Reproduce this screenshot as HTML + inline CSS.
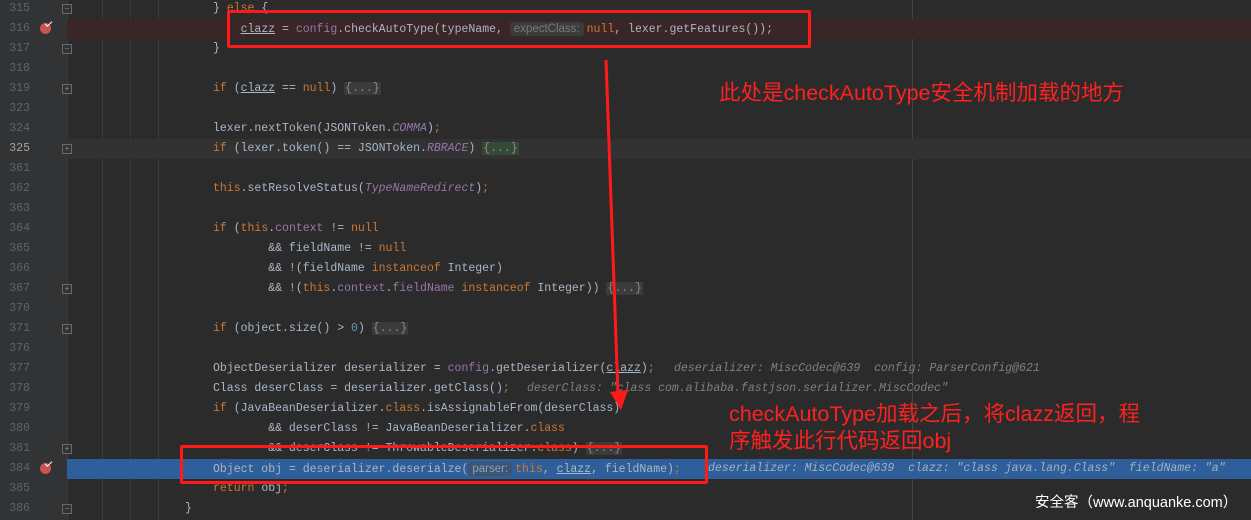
<!DOCTYPE html>
<html><head><meta charset="utf-8"><style>
body{margin:0;width:1251px;height:520px;overflow:hidden;background:#2b2b2b;position:relative;font-family:"Liberation Mono",monospace;}
.g{position:absolute;left:0;top:0;width:67px;height:520px;background:#313335;}
.gl{position:absolute;left:67px;top:0;width:1px;height:520px;background:#3a3a3a}
.row{position:absolute;left:0;width:1251px;height:20px;}
.n{position:absolute;left:0;width:30px;text-align:right;font-size:11.5px;line-height:20px;color:#606366;font-family:"Liberation Mono",monospace}
.c{position:absolute;left:213px;font-size:11.5px;line-height:20px;color:#a9b7c6;white-space:pre}
.k{color:#cc7832}.f{color:#9876aa}.i{color:#9876aa;font-style:italic}.num{color:#6897bb}
.u{text-decoration:underline}
.fold{background:#3b3b3b;color:#8a8a8a;padding:0 1px}
.hint{font-family:"Liberation Sans",sans-serif;font-size:11.5px;background:#3b3b3b;color:#7a7a7a;border-radius:3px;padding:1px 4px;margin-right:3px}
.dbg{position:absolute;font-size:11.5px;line-height:20px;color:#808080;font-style:italic;white-space:pre}
.bp{position:absolute;left:40px;top:4px;width:11px;height:11px;border-radius:50%;background:#c75450}
.bp:after{content:"";position:absolute;left:5px;top:-2px;width:6px;height:3px;border-left:1.5px solid #fff;border-bottom:1.5px solid #fff;transform:rotate(-45deg)}
.fm{position:absolute;left:62px;top:5px;width:8px;height:8px;border:1px solid #6a6a6a;background:#313335;font-size:8px;line-height:8px;text-align:center;color:#8a8a8a;font-family:"Liberation Sans",sans-serif}
.ann{position:absolute;color:#ff2020;font-family:"Liberation Sans","Noto Sans CJK SC",sans-serif;font-size:21.5px}
</style></head><body>
<div class="g"></div><div class="gl"></div>
<div style="position:absolute;left:102px;top:0;width:1px;height:520px;background:#3a3a3a"></div>
<div style="position:absolute;left:130px;top:0;width:1px;height:520px;background:#3a3a3a"></div>
<div style="position:absolute;left:158px;top:0;width:1px;height:520px;background:#3a3a3a"></div>
<div style="position:absolute;left:912px;top:0;width:1px;height:520px;background:#444"></div>

<div class="row" style="top:-1px"><div class="n">315</div><div class="fm">−</div><div class="c"><span>} </span><span class="k">else</span> {</div></div>
<div class="row" style="top:19px"><div style="position:absolute;left:67px;right:0;top:0;bottom:0;background:#3a2626"></div><div class="n">316</div><div class="bp"></div><div class="c">    <span class="u">clazz</span> = <span class="f">config</span>.checkAutoType(typeName, <span class="hint">expectClass:</span><span class="k">null</span>, lexer.getFeatures());</div></div>
<div class="row" style="top:39px"><div class="n">317</div><div class="fm">−</div><div class="c">}</div></div>
<div class="row" style="top:59px"><div class="n">318</div></div>
<div class="row" style="top:79px"><div class="n">319</div><div class="fm">+</div><div class="c"><span class="k">if</span> (<span class="u">clazz</span> == <span class="k">null</span>) <span class="fold">{...}</span></div></div>
<div class="row" style="top:99px"><div class="n">323</div></div>
<div class="row" style="top:119px"><div class="n">324</div><div class="c">lexer.nextToken(JSONToken.<span class="i">COMMA</span>)<span class="k">;</span></div></div>
<div class="row" style="top:139px"><div style="position:absolute;left:67px;right:0;top:0;bottom:0;background:#323232"></div><div class="n" style="color:#a4a3a3">325</div><div class="fm">+</div><div class="c"><span class="k">if</span> (lexer.token() == JSONToken.<span class="i">RBRACE</span>) <span class="fold" style="background:#344a37">{...}</span></div></div>
<div class="row" style="top:159px"><div class="n">361</div></div>
<div class="row" style="top:179px"><div class="n">362</div><div class="c"><span class="k">this</span>.setResolveStatus(<span class="i">TypeNameRedirect</span>)<span class="k">;</span></div></div>
<div class="row" style="top:199px"><div class="n">363</div></div>
<div class="row" style="top:219px"><div class="n">364</div><div class="c"><span class="k">if</span> (<span class="k">this</span>.<span class="f">context</span> != <span class="k">null</span></div></div>
<div class="row" style="top:239px"><div class="n">365</div><div class="c">        &amp;&amp; fieldName != <span class="k">null</span></div></div>
<div class="row" style="top:259px"><div class="n">366</div><div class="c">        &amp;&amp; !(fieldName <span class="k">instanceof</span> Integer)</div></div>
<div class="row" style="top:279px"><div class="n">367</div><div class="fm">+</div><div class="c">        &amp;&amp; !(<span class="k">this</span>.<span class="f">context</span>.<span class="f">fieldName</span> <span class="k">instanceof</span> Integer)) <span class="fold">{...}</span></div></div>
<div class="row" style="top:299px"><div class="n">370</div></div>
<div class="row" style="top:319px"><div class="n">371</div><div class="fm">+</div><div class="c"><span class="k">if</span> (object.size() &gt; <span class="num">0</span>) <span class="fold">{...}</span></div></div>
<div class="row" style="top:339px"><div class="n">376</div></div>
<div class="row" style="top:359px"><div class="n">377</div><div class="c">ObjectDeserializer deserializer = <span class="f">config</span>.getDeserializer(<span class="u">clazz</span>)<span class="k">;</span></div><div class="dbg" style="left:674px">deserializer: MiscCodec@639  config: ParserConfig@621</div></div>
<div class="row" style="top:379px"><div class="n">378</div><div class="c">Class deserClass = deserializer.getClass()<span class="k">;</span></div><div class="dbg" style="left:527px">deserClass: "class com.alibaba.fastjson.serializer.MiscCodec"</div></div>
<div class="row" style="top:399px"><div class="n">379</div><div class="c"><span class="k">if</span> (JavaBeanDeserializer.<span class="k">class</span>.isAssignableFrom(deserClass)</div></div>
<div class="row" style="top:419px"><div class="n">380</div><div class="c">        &amp;&amp; deserClass != JavaBeanDeserializer.<span class="k">class</span></div></div>
<div class="row" style="top:439px"><div class="n">381</div><div class="fm">+</div><div class="c">        &amp;&amp; deserClass != ThrowableDeserializer.<span class="k">class</span>) <span class="fold">{...}</span></div></div>
<div class="row" style="top:459px"><div style="position:absolute;left:67px;right:0;top:0;bottom:0;background:#2f5f9a"></div><div class="n">384</div><div class="bp"></div><div class="c">Object obj = deserializer.deserialze(<span class="hint" style="background:#3d5573;color:#8aa0b8">parser:</span><span class="k">this</span>, <span class="u">clazz</span>, fieldName)<span class="k">;</span></div><div class="dbg" style="left:708px;color:#a0b0c4">deserializer: MiscCodec@639  clazz: "class java.lang.Class"  fieldName: "a"</div></div>
<div class="row" style="top:479px"><div class="n">385</div><div class="c"><span class="k">return</span> obj<span class="k">;</span></div></div>
<div class="row" style="top:499px"><div class="n">386</div><div class="fm">−</div><div class="c" style="left:185px">}</div></div>

<div style="position:absolute;left:227px;top:10px;width:578px;height:32px;border:3px solid #ff1a1a;border-radius:2px"></div>
<div style="position:absolute;left:180px;top:445px;width:522px;height:33px;border:3px solid #ff1a1a;border-radius:2px"></div>
<svg style="position:absolute;left:0;top:0" width="1251" height="520"><path d="M606 60 L618 395" stroke="#ff1a1a" stroke-width="3"/><path d="M610 392 L621 410 L628 390 Z" fill="#ff1a1a"/></svg>

<div class="ann" style="left:719px;top:76px">此处是checkAutoType安全机制加载的地方</div>
<div class="ann" style="left:729px;top:401px;line-height:27px">checkAutoType加载之后，将clazz返回，程<br>序触发此行代码返回obj</div>
<div style="position:absolute;left:1035px;top:491px;color:#fff;font-family:'Liberation Sans','Noto Sans CJK SC',sans-serif;font-size:14.5px">安全客（www.anquanke.com）</div>
</body></html>
